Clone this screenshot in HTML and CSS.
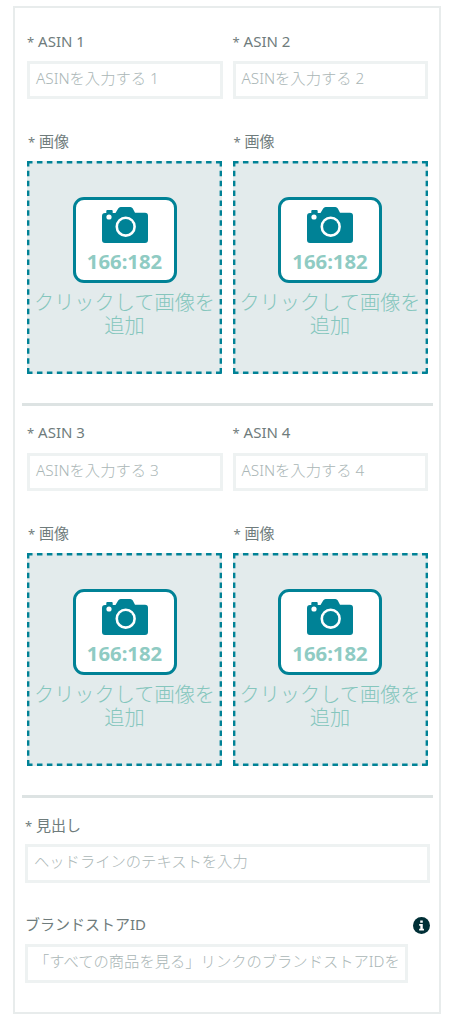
FILE: index.html
```html
<!DOCTYPE html>
<html lang="ja">
<head>
<meta charset="utf-8">
<title>Form</title>
<link rel="stylesheet" href="styles.css">
</head>
<body>
<svg class="defs" width="0" height="0" aria-hidden="true">
  <symbol id="cam" viewBox="0 0 46 36">
    <path fill="#008296" fill-rule="evenodd" d="M3 6h1.300V4q0-1 1-1h4.400q1 0 1 1v2h2.800l2.700-4.500q.8-1.500 2.500-1.500h9.600q1.700 0 2.500 1.500L33 5.800h10q3 0 3 3V33q0 3-3 3H3q-3 0-3-3V9q0-3 3-3zM7 7.400a2.600 2.600 0 1 0 0 5.200 2.600 2.600 0 0 0 0-5.200zM23.700 9.500a10.200 10.200 0 1 0 0 20.400 10.200 10.200 0 0 0 0-20.400z"/>
    <circle cx="23.700" cy="19.700" r="7.600" fill="#008296"/>
  </symbol>
</svg>
<main class="panel">
  <section class="group">
    <div class="pair">
      <div class="cell">
        <label class="lbl"><span class="star">*</span> ASIN 1</label>
        <div class="field"><span class="ph">ASINを入力する 1</span></div>
        <div class="lbl lbl-img"><span class="star">*</span> 画像</div>
        <div class="drop">
          <div class="badge"><svg class="cam"><use href="#cam"/></svg><span class="ratio">166:182</span></div>
          <p class="hint">クリックして画像を追加</p>
        </div>
      </div>
      <div class="cell">
        <label class="lbl"><span class="star">*</span> ASIN 2</label>
        <div class="field"><span class="ph">ASINを入力する 2</span></div>
        <div class="lbl lbl-img"><span class="star">*</span> 画像</div>
        <div class="drop">
          <div class="badge"><svg class="cam"><use href="#cam"/></svg><span class="ratio">166:182</span></div>
          <p class="hint">クリックして画像を追加</p>
        </div>
      </div>
    </div>
  </section>
  <hr class="rule">
  <section class="group group-second">
    <div class="pair">
      <div class="cell">
        <label class="lbl lbl-tight"><span class="star">*</span> ASIN 3</label>
        <div class="field"><span class="ph">ASINを入力する 3</span></div>
        <div class="lbl lbl-img"><span class="star">*</span> 画像</div>
        <div class="drop">
          <div class="badge"><svg class="cam"><use href="#cam"/></svg><span class="ratio">166:182</span></div>
          <p class="hint">クリックして画像を追加</p>
        </div>
      </div>
      <div class="cell">
        <label class="lbl lbl-tight"><span class="star">*</span> ASIN 4</label>
        <div class="field"><span class="ph">ASINを入力する 4</span></div>
        <div class="lbl lbl-img"><span class="star">*</span> 画像</div>
        <div class="drop">
          <div class="badge"><svg class="cam"><use href="#cam"/></svg><span class="ratio">166:182</span></div>
          <p class="hint">クリックして画像を追加</p>
        </div>
      </div>
    </div>
  </section>
  <hr class="rule">
  <section class="bottom">
    <label class="lbl"><span class="star">*</span> 見出し</label>
    <div class="field"><span class="ph">ヘッドラインのテキストを入力</span></div>
    <div class="lbl-row">
      <label class="lbl">ブランドストアID</label>
      <svg class="info" viewBox="0 0 16 16" aria-hidden="true"><circle cx="8" cy="8" r="8" fill="#002f36"/><path fill="#fff" d="M6.800 3.200h2.400v2.200H6.800zM5.800 6.500h3.400v4.600h1.100v1.700H5.800v-1.700h1.100V8.200H5.800z"/></svg>
    </div>
    <div class="field field-store"><span class="ph ph-store">「すべての商品を見る」リンクのブランドストアIDを</span></div>
  </section>
</main>
</body>
</html>
```
FILE: styles.css
```css
* { box-sizing: border-box; }
html, body { margin: 0; padding: 0; background: #fff; }
body {
  width: 459px;
  height: 1024px;
  overflow: hidden;
  font-family: "Noto Sans", "Noto Sans CJK JP", sans-serif;
}
.defs { position: absolute; }
.panel {
  width: 428px;
  height: 1008px;
  margin: 6px 0 0 13px;
  border: 2px solid #e8ecec;
  padding: 0 6px 0 7px;
}
.group { height: 389px; padding: 0 5px; }
.group:first-child { height: 395px; }
.pair { display: flex; gap: 10px; padding-top: 24px; }
.group-second .pair { padding-top: 17px; }
.cell { width: 196px; }
.lbl {
  display: block;
  height: 20px;
  font-size: 15px;
  line-height: 18px;
  color: #6f7c7c;
}
.lbl-tight { height: 21px; }
.star { font-size: 13px; }
.field {
  height: 38px;
  margin-top: 9px;
  border: 3px solid #eef2f2;
  padding: 0 6px;
  font-size: 15.300px;
  line-height: 29px;
  white-space: nowrap;
  overflow: hidden;
}
.ph { color: #aab6b6; font-weight: 300; }
.lbl-img { margin-top: 33px; padding-left: 1px; }
.drop {
  width: 195px;
  height: 213px;
  margin-top: 9px;
  background: #e3ebec url("data:image/svg+xml,%3Csvg xmlns='http://www.w3.org/2000/svg' width='195' height='213' fill='none' stroke='%23008296' stroke-width='2.400'%3E%3Cpath stroke-dasharray='5.500 4.447' d='M0 1.200H195M0 211.800H195'/%3E%3Cpath stroke-dasharray='5.500 4.357' d='M1.200 0V213M193.800 0V213'/%3E%3C/svg%3E") no-repeat;
  padding-top: 36px;
  display: flex;
  flex-direction: column;
  align-items: center;
}
.badge {
  width: 104px;
  height: 86px;
  background: #fff;
  border: 3px solid #008296;
  border-radius: 11px;
  display: flex;
  flex-direction: column;
  align-items: center;
  flex: none;
  padding-top: 7px;
}
.cam { width: 46px; height: 36px; display: block; }
.ratio {
  font-size: 20.300px;
  line-height: 26px;
  margin-top: 5px;
  font-weight: 700;
  color: #8fcbc3;
}
.hint {
  margin: 8px 0 0;
  width: 189px;
  text-align: center;
  font-size: 20.200px;
  line-height: 23px;
  font-weight: 300;
  color: #85c6bd;
}
.rule {
  margin: 0;
  border: 0;
  height: 3px;
  background: #dde3e3;
}
.bottom { padding: 18px 3px 0 3px; }
.bottom .field { margin-top: 8px; width: 405px; height: 39px; }
.lbl-row {
  display: flex;
  justify-content: space-between;
  align-items: center;
  margin-top: 32px;
}
.info { width: 17px; height: 17px; display: block; }
.bottom .field-store { width: 383px; margin-top: 9px; }
.ph-store { display: block; overflow: hidden; }
```
